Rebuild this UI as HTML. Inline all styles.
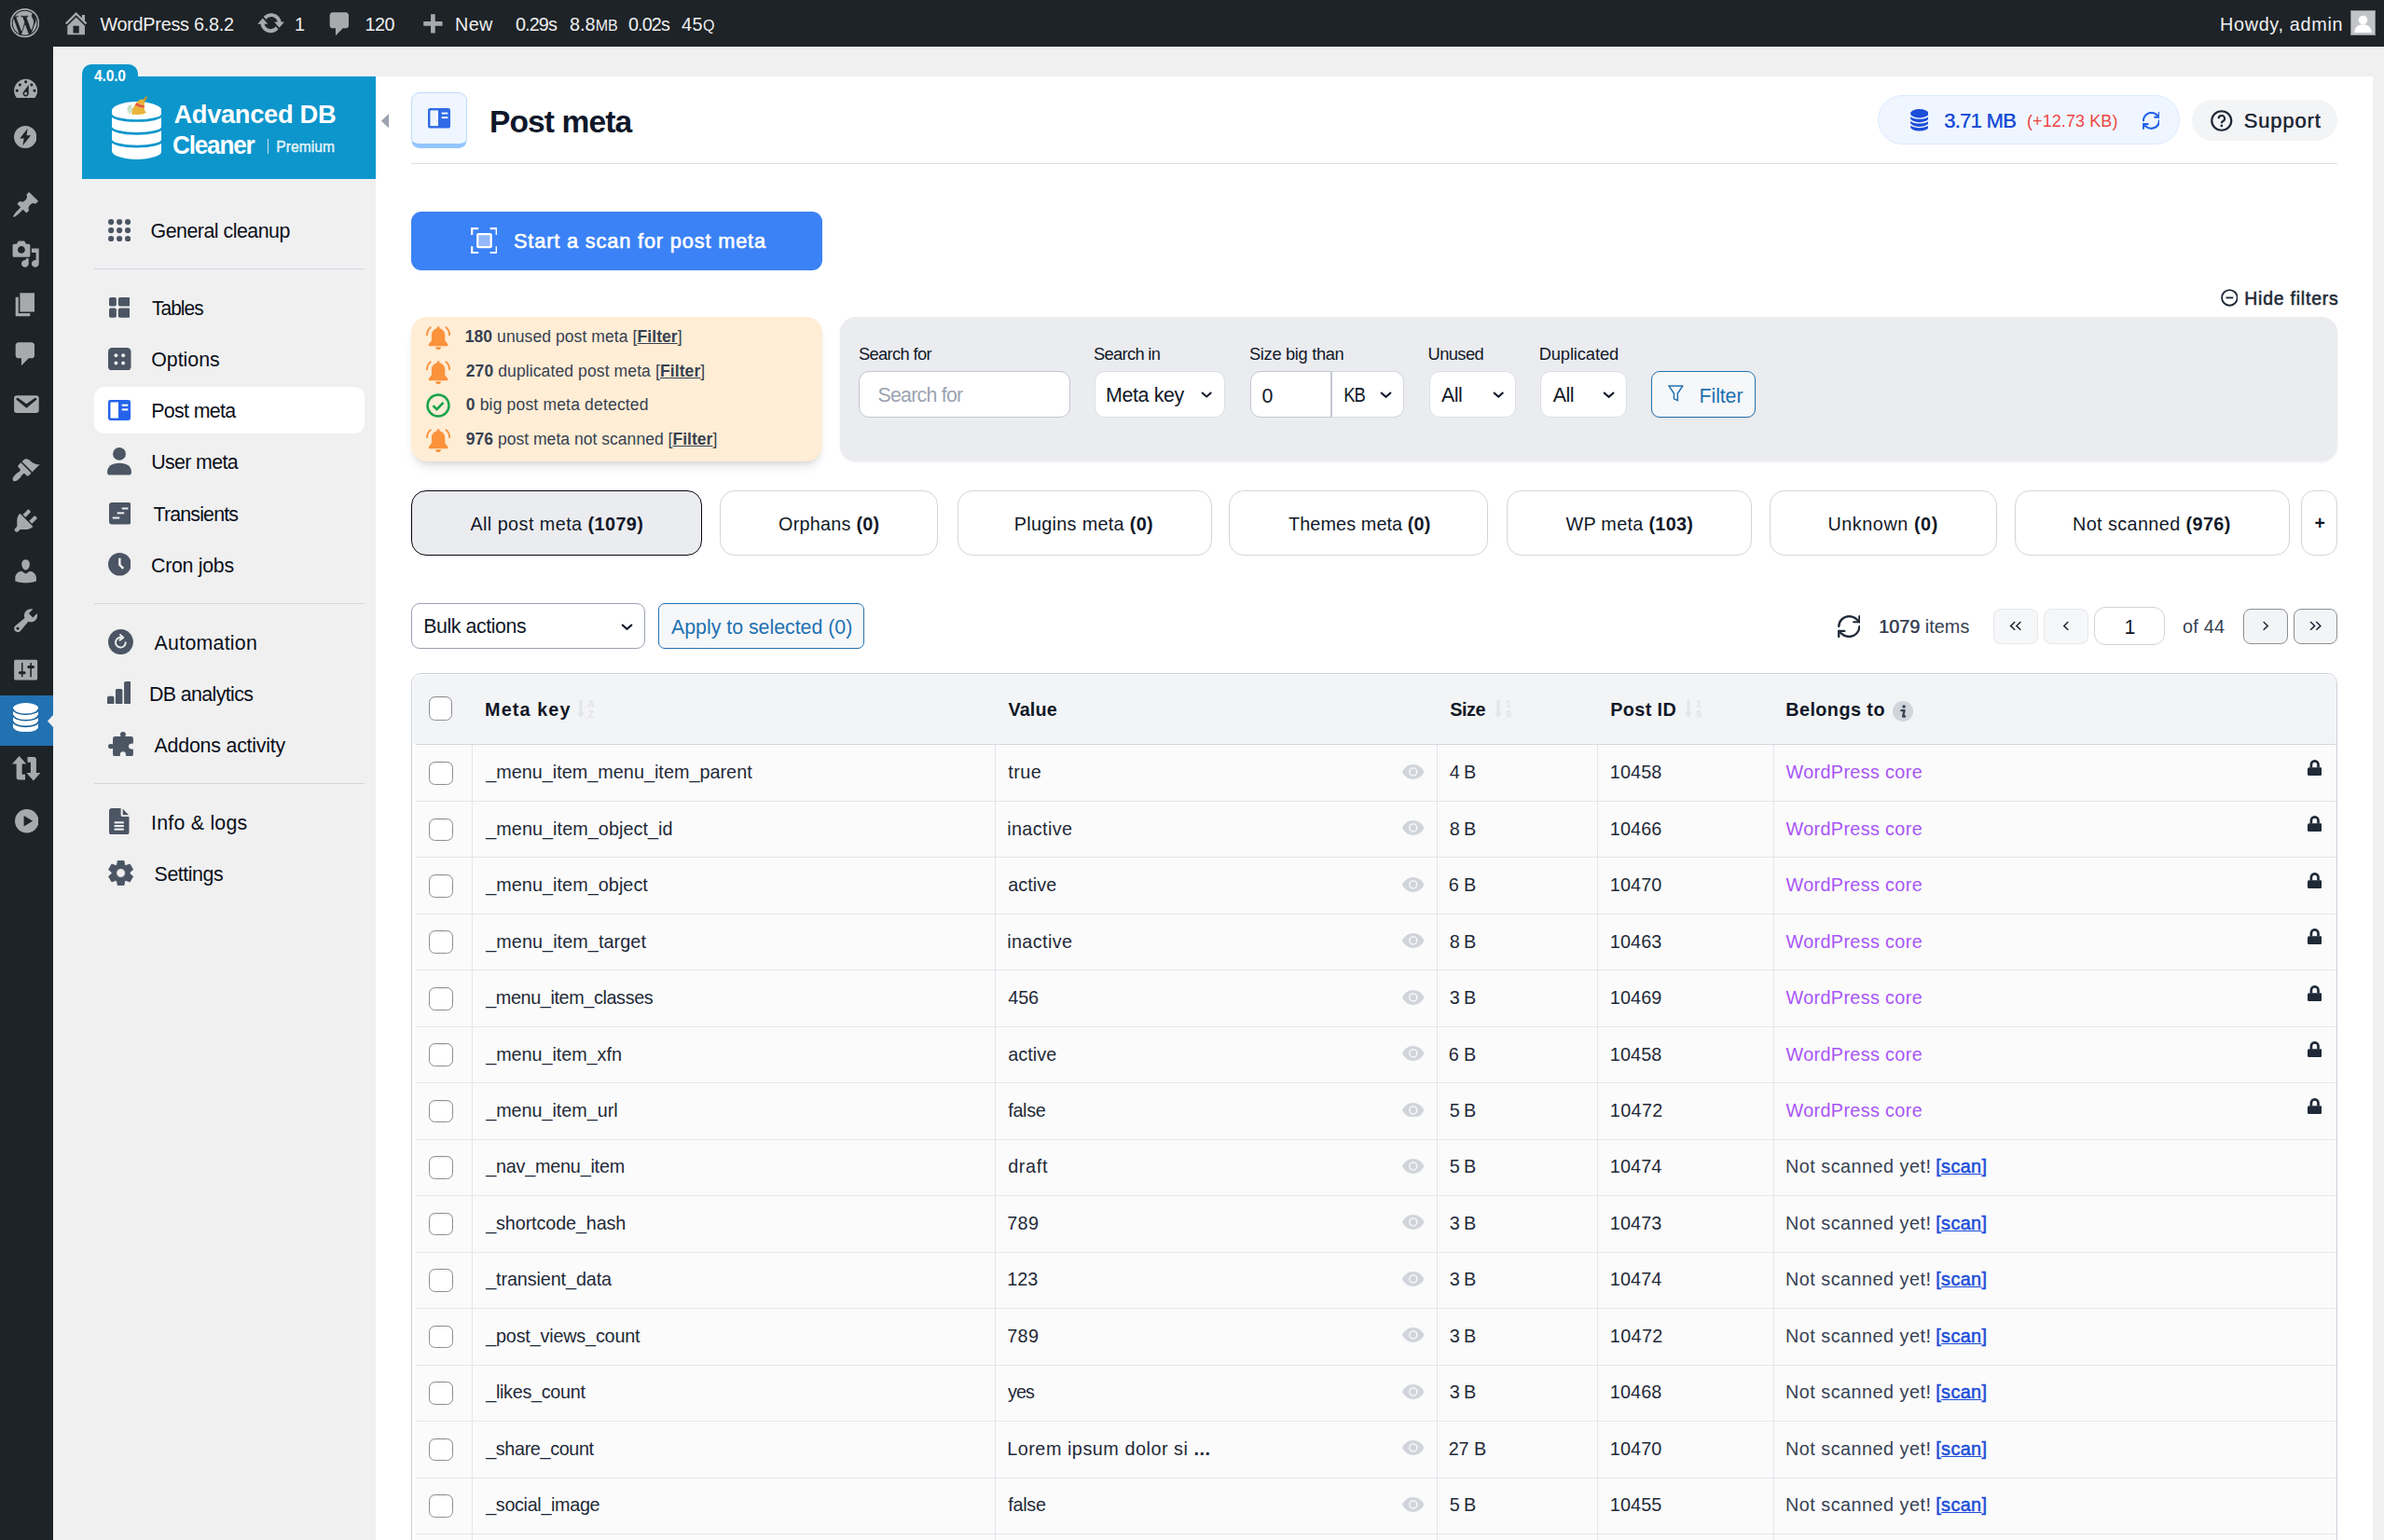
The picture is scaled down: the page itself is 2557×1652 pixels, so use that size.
<!DOCTYPE html><html lang="en"><head><meta charset="utf-8"><title>Post meta - Advanced DB Cleaner</title><style>
*{box-sizing:border-box;margin:0;padding:0}
html,body{width:2557px;height:1652px;overflow:hidden;background:#f0f0f1}
body{font-family:"Liberation Sans",sans-serif;position:relative;color:#1f2937}
.a{position:absolute;display:block}
.x{position:absolute;display:block;white-space:nowrap;line-height:1}
b{font-weight:700}
u{text-decoration:underline}
button{border:0;font:inherit;appearance:none}
</style></head><body><div id="wpadminbar"><div class="a" style="left:0px;top:0px;width:2557.00px;height:50.00px;background:#1d2327"></div><svg class="a" style="left:11px;top:9.4px" width="31.25" height="31.25" viewBox="0 0 20 20"><circle cx="10" cy="10" r="10" fill="#a7aaad"/><path fill="#1d2327" fill-rule="evenodd" stroke="#a7aaad" stroke-width=".500" d="M18.9 10a8.900 8.900 0 1 1-17.800 0a8.900 8.900 0 1 1 17.800 0zM7.78 15.37L4.37 6.22c.55-.02 1.17-.08 1.17-.08.5-.06.44-1.13-.06-1.11 0 0-1.45.11-2.37.11-.18 0-.37 0-.58-.01C4.12 2.69 6.87 1.11 10 1.11c2.33 0 4.45.87 6.05 2.34-.68-.11-1.65.39-1.65 1.58 0 .74.45 1.36.9 2.1.35.61.55 1.36.55 2.46 0 1.49-1.4 5-1.4 5l-3.03-8.37c.54-.02.82-.17.82-.17.5-.05.44-1.25-.06-1.22 0 0-1.44.12-2.38.12-.87 0-2.33-.12-2.33-.12-.5-.03-.56 1.2-.06 1.22l.92.08 1.26 3.41zM17.41 10c.24-.64.74-1.87.43-4.25.7 1.29 1.05 2.71 1.05 4.25 0 3.29-1.73 6.24-4.4 7.78.97-2.59 1.94-5.2 2.92-7.78zM6.1 18.09C3.12 16.65 1.11 13.53 1.11 10c0-1.3.23-2.48.72-3.59C3.25 10.3 4.67 14.2 6.1 18.09zM10.13 11.46l2.58 6.98c-.86.29-1.76.45-2.71.45-.79 0-1.57-.11-2.29-.33.81-2.38 1.62-4.74 2.42-7.1z"/><circle cx="10" cy="10" r="8.600" fill="none" stroke="#1d2327" stroke-width=".700"/></svg><svg class="a" style="left:65.6px;top:8.8px;" width="31.25" height="31.25" viewBox="0 0 20 20"><path fill="#a7aaad" fill-rule="evenodd" d="M16 8.5l1.53 1.53-1.06 1.06L10 4.62l-6.47 6.47-1.06-1.06L10 2.5l4 4v-2h2v4zm-6-2.46l6 5.99V18H4v-5.97zM12 17v-5H8v5h4z"/></svg><span class="x" style="letter-spacing:-0.241px;left:107.40px;top:17.00px;font-size:19.79px;font-weight:400;color:#f0f0f1;">WordPress 6.8.2</span><svg class="a" style="left:274.7px;top:9.2px;" width="31.25" height="31.25" viewBox="0 0 20 20"><path fill="#a7aaad" fill-rule="evenodd" d="M10.2 3.28c3.53 0 6.43 2.61 6.92 6h2.08l-3.5 4-3.5-4h2.32c-.45-1.97-2.21-3.45-4.32-3.45-1.45 0-2.73.71-3.54 1.78L4.95 5.66C6.23 4.2 8.11 3.28 10.2 3.28zm-.4 13.44c-3.52 0-6.43-2.61-6.92-6H.8l3.5-4c1.17 1.33 2.33 2.67 3.5 4H5.48c.45 1.97 2.21 3.45 4.32 3.45 1.45 0 2.73-.71 3.54-1.78l1.71 1.95c-1.28 1.46-3.15 2.38-5.25 2.38z"/></svg><span class="x" style="letter-spacing:0.000px;left:316.00px;top:17.00px;font-size:19.79px;font-weight:400;color:#f0f0f1;">1</span><svg class="a" style="left:349.3px;top:10.3px;" width="31.25" height="31.25" viewBox="0 0 20 20"><path fill="#a7aaad" fill-rule="evenodd" d="M5 2h9c1.1 0 2 .9 2 2v7c0 1.1-.9 2-2 2h-2l-5 5v-5H5c-1.1 0-2-.9-2-2V4c0-1.1.9-2 2-2z"/></svg><span class="x" style="letter-spacing:-0.557px;left:391.60px;top:17.00px;font-size:19.79px;font-weight:400;color:#f0f0f1;">120</span><svg class="a" style="left:447.5px;top:11.9px;" width="31.25" height="31.25" viewBox="0 0 20 20"><path fill="#a7aaad" fill-rule="evenodd" d="M17 7v3h-5v5H9v-5H4V7h5V2h3v5h5z"/></svg><span class="x" style="letter-spacing:0.354px;left:488.00px;top:17.00px;font-size:19.79px;font-weight:400;color:#f0f0f1;">New</span><span class="x" style="letter-spacing:-0.879px;left:553.00px;top:17.00px;font-size:19.79px;font-weight:400;color:#f0f0f1;">0.29s</span><span class="x" style="letter-spacing:0.043px;left:611.00px;top:17.00px;font-size:19.79px;font-weight:400;color:#f0f0f1;">8.8<span style="font-size:16px">MB</span></span><span class="x" style="letter-spacing:-0.879px;left:674.00px;top:17.00px;font-size:19.79px;font-weight:400;color:#f0f0f1;">0.02s</span><span class="x" style="letter-spacing:0.488px;left:731.00px;top:17.00px;font-size:19.79px;font-weight:400;color:#f0f0f1;">45<span style="font-size:16px">Q</span></span><span class="x" style="letter-spacing:0.693px;left:2381.00px;top:17.00px;font-size:19.79px;font-weight:400;color:#f0f0f1;">Howdy, admin</span><svg class="a" style="left:2521px;top:11px;outline:1px solid #8c8f94;outline-offset:-1px" width="27.00" height="27.00" viewBox="0 0 26 26" preserveAspectRatio="none"><rect width="26" height="26" fill="#c3c4c7"/><circle cx="13" cy="10.2" r="4.6" fill="#fff"/><path d="M4.2 23c0-5 3.6-8.2 8.8-8.2s8.8 3.2 8.8 8.2z" fill="#fff"/></svg></div><div id="adminmenu"><div class="a" style="left:0px;top:50px;width:57.00px;height:1602.00px;background:#1d2327"></div><svg class="a" style="left:12.2px;top:80.4px;" width="31.25" height="31.25" viewBox="0 0 20 20"><path fill="#a7aaad" fill-rule="evenodd" d="M3.76 16h12.48c1.1-1.37 1.76-3.11 1.76-5 0-4.42-3.58-8-8-8s-8 3.58-8 8c0 1.89.66 3.63 1.76 5zM10 4c.55 0 1 .45 1 1s-.45 1-1 1-1-.45-1-1 .45-1 1-1zM6 6c.55 0 1 .45 1 1s-.45 1-1 1-1-.45-1-1 .45-1 1-1zm8 0c.55 0 1 .45 1 1s-.45 1-1 1-1-.45-1-1 .45-1 1-1zm-5.37 5.55L12 7v6c0 1.1-.9 2-2 2s-2-.9-2-2c0-.57.24-1.08.63-1.45zM4 10c.55 0 1 .45 1 1s-.45 1-1 1-1-.45-1-1 .45-1 1-1zm12 0c.55 0 1 .45 1 1s-.45 1-1 1-1-.45-1-1 .45-1 1-1zm-5 3c0-.55-.45-1-1-1s-1 .45-1 1 .45 1 1 1 1-.45 1-1z"/></svg><svg class="a" style="left:15px;top:134.5px;" width="24.40" height="24.00" viewBox="0 0 24 24" preserveAspectRatio="none"><circle cx="12" cy="12" r="12" fill="#a7aaad"/><path d="M14.400 2.800L6.200 13.600h4.300l-1.400 7.600 8.700-11h-4.500z" fill="#1d2327"/></svg><svg class="a" style="left:12.2px;top:204.4px;" width="31.25" height="31.25" viewBox="0 0 20 20"><path fill="#a7aaad" fill-rule="evenodd" d="M10.44 3.02l1.82-1.82 6.36 6.35-1.83 1.82c-1.05-.68-2.48-.57-3.41.36l-.75.75c-.92.93-1.04 2.35-.35 3.41l-1.83 1.82-2.41-2.41-2.8 2.79c-.42.42-3.38 2.71-3.8 2.29s1.86-3.39 2.28-3.81l2.79-2.79L4.1 9.36l1.83-1.82c1.05.69 2.48.57 3.4-.36l.75-.75c.93-.92 1.05-2.35.36-3.41z"/></svg><svg class="a" style="left:12.2px;top:257.4px;" width="31.25" height="31.25" viewBox="0 0 20 20"><path fill="#a7aaad" fill-rule="evenodd" d="M13 11V4c0-.55-.45-1-1-1h-1.67L9 1H5L3.67 3H2c-.55 0-1 .45-1 1v7c0 .55.45 1 1 1h10c.55 0 1-.45 1-1zM7 4.5c1.38 0 2.5 1.12 2.5 2.5S8.38 9.5 7 9.5 4.5 8.38 4.5 7 5.62 4.5 7 4.5zM14 6h5v10.5c0 1.38-1.12 2.5-2.5 2.5S14 17.88 14 16.5s1.12-2.5 2.5-2.5c.17 0 .34.02.5.05V9h-3V6zm-4 8.05V13h2v3.5c0 1.38-1.12 2.5-2.5 2.5S7 17.88 7 16.5 8.12 14 9.5 14c.17 0 .34.02.5.05z"/></svg><svg class="a" style="left:12.2px;top:310.9px;" width="31.25" height="31.25" viewBox="0 0 20 20"><path fill="#a7aaad" fill-rule="evenodd" d="M6 15V2h10v13H6zm-1 1h8v2H3V5h2v11z"/></svg><svg class="a" style="left:12.2px;top:363.9px;" width="31.25" height="31.25" viewBox="0 0 20 20"><path fill="#a7aaad" fill-rule="evenodd" d="M5 2h9c1.1 0 2 .9 2 2v7c0 1.1-.9 2-2 2h-2l-5 5v-5H5c-1.1 0-2-.9-2-2V4c0-1.1.9-2 2-2z"/></svg><svg class="a" style="left:12.2px;top:417.9px;" width="31.25" height="31.25" viewBox="0 0 20 20"><path fill="#a7aaad" fill-rule="evenodd" d="M3.87 4h13.25C18.37 4 19 4.59 19 5.79v8.42c0 1.19-.63 1.79-1.88 1.79H3.87c-1.25 0-1.88-.6-1.88-1.79V5.79c0-1.2.63-1.79 1.88-1.79zm6.62 8.6l6.74-5.53c.24-.2.43-.66.13-1.07-.29-.41-.82-.42-1.17-.17l-5.7 3.86L4.8 5.83c-.35-.25-.88-.24-1.17.17-.3.41-.11.87.13 1.07z"/></svg><svg class="a" style="left:12.2px;top:489.4px;" width="31.25" height="31.25" viewBox="0 0 20 20"><path fill="#a7aaad" fill-rule="evenodd" d="M14.48 11.06L7.41 3.99l1.5-1.5c.5-.56 2.3-.47 3.51.32 1.21.8 1.43 1.28 2.91 2.1 1.18.64 2.45 1.26 4.45.85zm-.71.71L6.7 4.7 4.93 6.47c-.39.39-.39 1.02 0 1.41l1.06 1.06c.39.39.39 1.03 0 1.42-.6.6-1.43 1.11-2.21 1.69-.35.26-.7.53-1.01.84C1.43 14.23.4 16.08 1.4 17.07c.99 1 2.84-.03 4.18-1.36.31-.31.58-.66.85-1.02.57-.78 1.08-1.61 1.69-2.21.39-.39 1.02-.39 1.41 0l1.06 1.06c.39.39 1.02.39 1.41 0z"/></svg><svg class="a" style="left:12.2px;top:542.9px;" width="31.25" height="31.25" viewBox="0 0 20 20"><path fill="#a7aaad" fill-rule="evenodd" d="M13.11 4.36L9.87 7.6 8 5.73l3.24-3.24c.35-.34 1.05-.2 1.56.32.52.51.66 1.21.31 1.55zm-8 1.77l.91-1.12 9.01 9.01-1.19.84c-.71.71-2.63 1.16-3.82 1.16H6.14L4.9 17.26c-.59.59-1.54.59-2.12 0-.59-.58-.59-1.53 0-2.12l1.24-1.24v-3.88c0-1.13.4-3.19 1.09-3.89zm7.26 3.97l3.24-3.24c.34-.35 1.04-.21 1.55.31.52.51.66 1.21.31 1.55l-3.24 3.25z"/></svg><svg class="a" style="left:12.2px;top:596.9px;" width="31.25" height="31.25" viewBox="0 0 20 20"><path fill="#a7aaad" fill-rule="evenodd" d="M10 9.25c-2.27 0-2.73-3.44-2.73-3.44C7 4.02 7.82 2 9.97 2c2.16 0 2.98 2.02 2.71 3.81 0 0-.41 3.44-2.68 3.44zm0 2.57L12.72 10c2.39 0 4.52 2.33 4.52 4.53v2.49s-3.65 1.13-7.24 1.13c-3.65 0-7.24-1.13-7.24-1.13v-2.49c0-2.25 1.94-4.48 4.47-4.48z"/></svg><svg class="a" style="left:12.2px;top:649.9px;" width="31.25" height="31.25" viewBox="0 0 20 20"><path fill="#a7aaad" fill-rule="evenodd" d="M16.68 9.77c-1.34 1.34-3.3 1.67-4.95.99l-5.41 6.52c-.99.99-2.59.99-3.58 0s-.99-2.59 0-3.57l6.52-5.42c-.68-1.65-.35-3.61.99-4.95 1.28-1.28 3.12-1.62 4.72-1.06l-2.89 2.89 2.82 2.82 2.86-2.87c.53 1.58.18 3.39-1.08 4.65zM3.81 16.21c.4.39 1.04.39 1.43 0 .4-.4.4-1.04 0-1.43-.39-.4-1.03-.4-1.43 0-.39.39-.39 1.03 0 1.43z"/></svg><svg class="a" style="left:12.2px;top:703.4px;" width="31.25" height="31.25" viewBox="0 0 20 20"><path fill="#a7aaad" fill-rule="evenodd" d="M18 16V4c0-.55-.45-1-1-1H3c-.55 0-1 .45-1 1v12c0 .55.45 1 1 1h14c.55 0 1-.45 1-1zM8 11h1c.55 0 1 .45 1 1s-.45 1-1 1H8v1.5c0 .28-.22.5-.5.5s-.5-.22-.5-.5V13H6c-.55 0-1-.45-1-1s.45-1 1-1h1V5.5c0-.28.22-.5.5-.5s.5.22.5.5V11zm5-2h-1c-.55 0-1-.45-1-1s.45-1 1-1h1V5.5c0-.28.22-.5.5-.5s.5.22.5.5V7h1c.55 0 1 .45 1 1s-.45 1-1 1h-1v5.5c0 .28-.22.5-.5.5s-.5-.22-.5-.5V9z"/></svg><div class="a" style="left:0px;top:746px;width:57.00px;height:54.00px;background:#2271b1"></div><svg class="a" style="left:13.9px;top:753.7px;" width="27.30" height="31.30" viewBox="0 0 27.3 31.3" preserveAspectRatio="none"><g fill="#fff"><rect x="0" y="5.7" width="27.3" height="19.9"/><ellipse cx="13.65" cy="5.7" rx="13.65" ry="5.7"/><ellipse cx="13.65" cy="25.6" rx="13.65" ry="5.7"/></g><g fill="none" stroke="#135e96" stroke-width="1.600"><path d="M0 6.600A13.650 5.700 0 0 0 27.300 6.600"/><path d="M0 13.100A13.650 5.700 0 0 0 27.300 13.100"/><path d="M0 19.700A13.650 5.700 0 0 0 27.300 19.700"/></g></svg><svg class="a" style="left:50.9px;top:766.6px;" width="6.10" height="13.00" viewBox="0 0 6.1 13" preserveAspectRatio="none"><path d="M6.1 0v13L0 6.500z" fill="#f0f0f1"/></svg><svg class="a" style="left:12.5px;top:811px;" width="30.50" height="26.50" viewBox="0 0 30.5 26.5" preserveAspectRatio="none"><g fill="#a7aaad"><path d="M7.6 0L0 8.600h4.600v14.400c0 1.400 1.100 2.500 2.500 2.500H14v-5.700h-3.400V8.600h4.600z"/><path d="M22.900 26.500l7.600-8.600h-4.600V3.500c0-1.400-1.100-2.500-2.500-2.500H16.500v5.700h3.400v11.200h-4.600z"/></g></svg><svg class="a" style="left:15.5px;top:868px;" width="25.50" height="25.50" viewBox="0 0 24 24" preserveAspectRatio="none"><circle cx="12" cy="12" r="12" fill="#a7aaad"/><path d="M9 6.500l9 5.500-9 5.500z" fill="#1d2327"/></svg></div><div id="adbc-sidebar"><div class="a" style="left:88px;top:69px;width:60.00px;height:21.00px;background:#0d96cc;border-radius:10px 10px 0 0"></div><div class="a" style="left:88px;top:82px;width:315.00px;height:110.00px;background:#0d96cc"></div><span class="x" style="letter-spacing:-0.179px;left:101.00px;top:74.00px;font-size:15.6px;font-weight:700;color:#fff;">4.0.0</span><svg class="a" style="left:119.7px;top:103px;" width="53.50" height="69.00" viewBox="0 0 53.5 69" preserveAspectRatio="none"><rect x="0" y="15.6" width="53.5" height="43.5" fill="#fff"/><ellipse cx="26.75" cy="59.1" rx="26.75" ry="8.8" fill="#fff"/><ellipse cx="26.75" cy="15.6" rx="26.75" ry="9.5" fill="#fff"/><g fill="none" stroke="#0d96cc" stroke-width="2.700"><path d="M-.5 19.900A27.250 6.600 0 0 0 54 19.900"/><path d="M-.5 33.700A27.250 6.600 0 0 0 54 33.700"/><path d="M-.5 47.500A27.250 6.600 0 0 0 54 47.500"/></g><path d="M36.300 .200l1.900 1-3.700 6.200-2.300-1.200z" fill="#c9972b"/><path d="M33.500 3.500C30.500 3 27.500 5 25.500 8.500C22.500 12 20.800 16 21.400 19.200L23 20.400L24.500 19.300L26 20.600L27.600 19.400L29.300 20.500L31 19.200L33 19.800L35.200 18.400L37.200 17.600C35.600 16.500 34.400 14.800 34.600 12.500C35 9 35.500 6 33.500 3.500z" fill="#e8b43a"/><path d="M26.200 7.300c2.600 1.600 5.400 2.600 8.600 3l-.300 2.500c-3.400-.400-6.600-1.500-9.600-3.300z" fill="#e5534b"/><path d="M17.200 17.500l3.800-8M18.800 19l3-6.500M16.600 14.500l2.600-4.500" stroke="#a9cfa6" stroke-width="1.100" fill="none"/></svg><span class="x" style="letter-spacing:-0.317px;left:186.40px;top:109.00px;font-size:27.3px;font-weight:700;color:#fff;">Advanced DB</span><span class="x" style="transform:scaleX(0.9741);transform-origin:1.00px 50%;letter-spacing:-1.206px;left:185.40px;top:143.00px;font-size:26.81px;font-weight:700;color:#fff;">Cleaner</span><div class="a" style="left:286.5px;top:149px;width:1.30px;height:16.00px;background:rgba(255,255,255,.75)"></div><span class="x" style="letter-spacing:0.050px;left:296.30px;top:150.00px;font-size:15.6px;font-weight:400;color:rgba(255,255,255,.86);-webkit-text-stroke:0.44px currentColor;">Premium</span><div class="a" style="left:101px;top:288px;width:290.00px;height:1.30px;background:#d3d7de"></div><div class="a" style="left:101px;top:647.2px;width:290.00px;height:1.30px;background:#d3d7de"></div><div class="a" style="left:101px;top:840px;width:290.00px;height:1.30px;background:#d3d7de"></div><div class="a" style="left:101px;top:415.2px;width:290.00px;height:49.40px;background:#fff;border-radius:11px"></div><span class="x" style="letter-spacing:-0.491px;left:161.60px;top:238.00px;font-size:21.35px;font-weight:400;color:#0b0f19;">General cleanup</span><span class="x" style="transform:scaleX(0.9782);transform-origin:-0.00px 50%;letter-spacing:-0.961px;left:163.00px;top:321.00px;font-size:21.35px;font-weight:400;color:#0b0f19;">Tables</span><span class="x" style="letter-spacing:-0.015px;left:162.20px;top:376.00px;font-size:21.35px;font-weight:400;color:#0b0f19;">Options</span><span class="x" style="letter-spacing:-0.640px;left:162.20px;top:431.00px;font-size:21.35px;font-weight:400;color:#0b0f19;">Post meta</span><span class="x" style="letter-spacing:-0.623px;left:162.20px;top:486.00px;font-size:21.35px;font-weight:400;color:#0b0f19;">User meta</span><span class="x" style="letter-spacing:-0.832px;left:164.60px;top:542.00px;font-size:21.35px;font-weight:400;color:#0b0f19;">Transients</span><span class="x" style="letter-spacing:-0.286px;left:162.00px;top:597.00px;font-size:21.35px;font-weight:400;color:#0b0f19;">Cron jobs</span><span class="x" style="letter-spacing:0.254px;left:165.60px;top:680.00px;font-size:21.35px;font-weight:400;color:#0b0f19;">Automation</span><span class="x" style="letter-spacing:-0.605px;left:160.00px;top:735.00px;font-size:21.35px;font-weight:400;color:#0b0f19;">DB analytics</span><span class="x" style="letter-spacing:-0.206px;left:165.60px;top:790.00px;font-size:21.35px;font-weight:400;color:#0b0f19;">Addons activity</span><span class="x" style="letter-spacing:0.241px;left:162.00px;top:873.00px;font-size:21.35px;font-weight:400;color:#0b0f19;">Info &amp; logs</span><span class="x" style="letter-spacing:-0.436px;left:165.60px;top:928.00px;font-size:21.35px;font-weight:400;color:#0b0f19;">Settings</span><svg class="a" style="left:115.8px;top:234.8px;" width="24.20" height="24.20" viewBox="0 0 24 24" preserveAspectRatio="none"><g fill="#4b5563"><circle cx="3.1" cy="3.1" r="3.1"/><circle cx="3.1" cy="12" r="3.1"/><circle cx="3.1" cy="20.9" r="3.1"/><circle cx="12" cy="3.1" r="3.1"/><circle cx="12" cy="12" r="3.1"/><circle cx="12" cy="20.9" r="3.1"/><circle cx="20.9" cy="3.1" r="3.1"/><circle cx="20.9" cy="12" r="3.1"/><circle cx="20.9" cy="20.9" r="3.1"/></g></svg><svg class="a" style="left:116.5px;top:319px;" width="22.70" height="21.70" viewBox="0 0 24 24" preserveAspectRatio="none"><g fill="#4b5563"><rect x="0" y="0" width="8.3" height="10.6" rx="2"/><rect x="10.4" y="0" width="13.6" height="10.6" rx="2"/><rect x="0" y="12.8" width="8.3" height="11.2" rx="2"/><rect x="10.4" y="12.8" width="13.6" height="11.2" rx="2"/></g></svg><svg class="a" style="left:116px;top:372.5px;" width="24.50" height="24.70" viewBox="0 0 24 24" preserveAspectRatio="none"><rect width="24" height="24" rx="4.2" fill="#4b5563"/><g fill="#f0f0f1"><circle cx="8.2" cy="8" r="1.9"/><circle cx="15.8" cy="8" r="1.9"/><circle cx="8.2" cy="16" r="1.900"/><circle cx="15.800" cy="16" r="1.900"/></g></svg><svg class="a" style="left:116px;top:428.8px;" width="24.00" height="22.00" viewBox="0 0 24 24" preserveAspectRatio="none"><rect width="24" height="24" rx="2.6" fill="#2563eb"/><rect x="2.45" y="2.7" width="8.55" height="18.6" fill="#fff"/><rect x="14.700" y="5.100" width="6.600" height="2.200" fill="#fff"/><rect x="14.700" y="10.200" width="6.600" height="2.200" fill="#fff"/></svg><svg class="a" style="left:115px;top:480.4px;" width="26.00" height="29.60" viewBox="0 0 24 24" preserveAspectRatio="none"><g fill="#4b5563"><ellipse cx="12" cy="5.6" rx="6.4" ry="5.6"/><path d="M0 21.500c0-5 4.500-8 12-8s12 3 12 8c0 1.600-1 2.500-2.500 2.500h-19C1 24 0 23.100 0 21.500z"/></g></svg><svg class="a" style="left:116.8px;top:539px;" width="23.70" height="23.50" viewBox="0 0 24 24" preserveAspectRatio="none"><rect width="24" height="24" rx="3" fill="#4b5563"/><g fill="#f0f0f1"><rect x="13.9" y="5.6" width="6.8" height="2"/><rect x="8.800" y="10.600" width="7.600" height="2"/><rect x="3.800" y="15.900" width="7.600" height="2"/></g></svg><svg class="a" style="left:115.6px;top:593.4px;" width="24.70" height="24.60" viewBox="0 0 24 24" preserveAspectRatio="none"><circle cx="12" cy="12" r="12" fill="#4b5563"/><path d="M12 5.500v7l3.800 4" stroke="#f0f0f1" stroke-width="2.400" fill="none"/></svg><svg class="a" style="left:116.1px;top:674.9px;" width="26.90" height="27.10" viewBox="0 0 24 24" preserveAspectRatio="none"><circle cx="12" cy="12" r="12" fill="#4b5563"/><g fill="none" stroke="#f0f0f1" stroke-width="1.700" stroke-linecap="round" stroke-linejoin="round"><path d="M16.700 12.600A4.800 4.800 0 1 1 12.600 7.800"/><path d="M11.600 5.300L14.500 8 11.200 10.300"/></g></svg><svg class="a" style="left:114.5px;top:730.8px;" width="25.50" height="24.70" viewBox="0 0 24 24" preserveAspectRatio="none"><g fill="#4b5563"><rect x="0" y="15.3" width="7" height="8.7" rx="1.6"/><rect x="8.4" y="7.7" width="7" height="16.3" rx="1.6"/><rect x="17" y="0" width="7" height="24" rx="1.6"/></g></svg><svg class="a" style="left:116.1px;top:785.2px;" width="26.90" height="26.20" viewBox="0 0 24 24" preserveAspectRatio="none"><g fill="#4b5563"><rect x="4.500" y="4.600" width="19.500" height="19.400" rx="2"/><circle cx="14.200" cy="2.600" r="2.600"/><rect x="12.300" y="2.600" width="3.800" height="3"/><circle cx="2.500" cy="14.300" r="2.500"/><rect x="2.500" y="12.300" width="3" height="4"/></g><g fill="#f0f0f1"><circle cx="22.300" cy="14.300" r="2.700"/><rect x="22.300" y="11.600" width="2" height="5.400"/><circle cx="14.200" cy="22.200" r="2.700"/><rect x="11.500" y="22.200" width="5.400" height="2"/></g></svg><svg class="a" style="left:117.3px;top:866.6px;" width="21.50" height="28.60" viewBox="0 0 21.5 28.6" preserveAspectRatio="none"><path d="M3 0H12.600V7.300a1.600 1.600 0 0 0 1.600 1.600H21.500V25.600a3 3 0 0 1-3 3H3a3 3 0 0 1-3-3V3a3 3 0 0 1 3-3z" fill="#4b5563"/><path d="M14.700 .700L21.100 7.200H14.700z" fill="#4b5563"/><g fill="#f0f0f1"><rect x="5.600" y="14.300" width="10.200" height="2.100"/><rect x="5.600" y="18" width="10.200" height="2.100"/><rect x="5.600" y="21.600" width="10.200" height="2.100"/></g></svg><svg class="a" style="left:115.9px;top:922.9px;" width="27.20" height="27.00" viewBox="0 0 27.2 27" preserveAspectRatio="none"><path d="M9.47 4.72L10.24 0.32L16.96 0.32L17.73 4.72A9.7 9.7 0 0 1 19.13 5.53L19.13 5.53L23.33 4.00L26.69 9.83L23.27 12.69A9.7 9.7 0 0 1 23.27 14.31L23.27 14.31L26.69 17.17L23.33 23.00L19.13 21.47A9.7 9.7 0 0 1 17.73 22.28L17.73 22.28L16.96 26.68L10.24 26.68L9.47 22.28A9.7 9.7 0 0 1 8.07 21.47L8.07 21.47L3.87 23.00L0.51 17.17L3.93 14.31A9.7 9.7 0 0 1 3.93 12.69L3.93 12.69L0.51 9.83L3.87 4.00L8.07 5.53A9.7 9.7 0 0 1 9.47 4.72zM8.8 13.5a4.8 4.8 0 1 0 9.6 0a4.8 4.8 0 1 0 -9.6 0z" fill="#4b5563" fill-rule="evenodd" stroke="#4b5563" stroke-width=".800" stroke-linejoin="round"/></svg></div><div id="adbc-main"><div class="a" style="left:403px;top:82px;width:2142.00px;height:1618.00px;background:#fff"></div><svg class="a" style="left:408.7px;top:121.5px;" width="8.10" height="15.50" viewBox="0 0 8 16" preserveAspectRatio="none"><path d="M8 0v16L0 8z" fill="#9ca3af"/></svg><div class="a" style="left:441px;top:99px;width:60.00px;height:59.60px;background:#eff6ff;border:1px solid #bfdbfe;border-bottom:5px solid #93c5fd;border-radius:9px"></div><svg class="a" style="left:459px;top:116px;" width="24.00" height="21.50" viewBox="0 0 24 24" preserveAspectRatio="none"><rect width="24" height="24" rx="2.6" fill="#2f6be6"/><rect x="2.45" y="2.7" width="8.55" height="18.6" fill="#eff6ff"/><rect x="14.7" y="5.1" width="6.6" height="2.2" fill="#eff6ff"/><rect x="14.7" y="10.2" width="6.6" height="2.2" fill="#eff6ff"/></svg><h1 class="x" style="letter-spacing:-0.877px;left:525.00px;top:114.00px;font-size:33.54px;font-weight:700;color:#0f172a;">Post meta</h1><div class="a" style="left:2014px;top:102px;width:324.00px;height:53.00px;background:#eff6ff;border:1px solid #dbeafe;border-radius:27px"></div><svg class="a" style="left:2048.8px;top:117.4px;" width="19.50" height="23.60" viewBox="0 0 20 24" preserveAspectRatio="none"><ellipse cx="10" cy="19.200" rx="10" ry="4.800" fill="#1d4ed8"/><ellipse cx="10" cy="15.800" rx="11" ry="4.800" fill="#eff6ff"/><ellipse cx="10" cy="14.400" rx="10" ry="4.800" fill="#1d4ed8"/><ellipse cx="10" cy="11" rx="11" ry="4.800" fill="#eff6ff"/><ellipse cx="10" cy="9.600" rx="10" ry="4.800" fill="#1d4ed8"/><ellipse cx="10" cy="6.200" rx="11" ry="4.800" fill="#eff6ff"/><ellipse cx="10" cy="4.800" rx="10" ry="4.800" fill="#1d4ed8"/></svg><span class="x" style="letter-spacing:-0.678px;left:2085.00px;top:119.00px;font-size:21.94px;font-weight:400;color:#1d4ed8;text-shadow:0.4px 0 0 currentColor">3.71 MB</span><span class="x" style="letter-spacing:0.114px;left:2174.00px;top:122.00px;font-size:17.94px;font-weight:400;color:#ef4444;">(+12.73 KB)</span><svg class="a" style="left:2297.5px;top:119.8px;" width="18.90" height="18.80" viewBox="2 2 20 20" preserveAspectRatio="none"><g fill="none" stroke="#2563eb" stroke-width="2.3" stroke-linecap="round" stroke-linejoin="round"><path d="M3 12a9 9 0 0 1 9-9 9.750 9.750 0 0 1 6.740 2.740L21 8"/><path d="M21 3v5h-5"/><path d="M21 12a9 9 0 0 1-9 9 9.750 9.750 0 0 1-6.740-2.740L3 16"/><path d="M8 16H3v5"/></g></svg><div class="a" style="left:2351px;top:107px;width:156.00px;height:44.00px;background:#f3f4f6;border-radius:22px"></div><svg class="a" style="left:2371px;top:118.3px;" width="23.50" height="23.00" viewBox="0 0 24 24" preserveAspectRatio="none"><circle cx="12" cy="12" r="10.700" fill="none" stroke="#1f2937" stroke-width="2.300"/><path d="M8.800 9.600a3.300 3.300 0 1 1 4.800 2.900c-1 .600-1.500 1.100-1.500 2.300" fill="none" stroke="#1f2937" stroke-width="2.200"/><circle cx="12.100" cy="17.700" r="1.400" fill="#1f2937"/></svg><span class="x" style="letter-spacing:0.892px;left:2406.50px;top:119.00px;font-size:21.94px;font-weight:400;color:#1f2937;text-shadow:0.4px 0 0 currentColor">Support</span><div class="a" style="left:441px;top:175px;width:2066.00px;height:1.30px;background:#dbdee5"></div><button class="a btn" style="left:441px;top:227.3px;width:441.00px;height:62.40px;background:#3b82f6;border-radius:11px"></button><svg class="a" style="left:504.5px;top:243.7px;" width="28.90" height="28.30" viewBox="0 0 28 28" preserveAspectRatio="none"><g fill="none" stroke="#fff" stroke-width="2.200"><path d="M1.100 8V1.100h6.900"/><path d="M20 1.100h6.900V8"/><path d="M26.900 20v6.900H20"/><path d="M8 26.900H1.100V20"/></g><rect x="7" y="7" width="14" height="14" rx="1" fill="#93b8fa" stroke="#fff" stroke-width="2.200"/></svg><span class="x" style="letter-spacing:0.849px;left:551.00px;top:248.00px;font-size:21.74px;font-weight:400;color:#fff;-webkit-text-stroke:0.61px currentColor;">Start a scan for post meta</span><svg class="a" style="left:2381.7px;top:310px;" width="18.80" height="18.80" viewBox="0 0 24 24" preserveAspectRatio="none"><circle cx="12" cy="12" r="10.600" fill="none" stroke="#1f2937" stroke-width="2.400"/><path d="M7 12h10" stroke="#1f2937" stroke-width="2.400"/></svg><span class="x" style="letter-spacing:0.799px;left:2407.30px;top:311.00px;font-size:19.4px;font-weight:400;color:#1f2937;-webkit-text-stroke:0.54px currentColor;">Hide filters</span><div class="a" style="left:441.3px;top:339.8px;width:440.50px;height:154.80px;background:#ffedd5;border-radius:17px;box-shadow:0 8px 12px -4px rgba(0,0,0,.13),0 3px 5px -2px rgba(0,0,0,.08)"></div><svg class="a" style="left:457.1px;top:349.9px;" width="26.20" height="25.20" viewBox="0 0 26.2 25.2" preserveAspectRatio="none"><g fill="#fb923c"><path d="M13.100 .200C12.200 .200 11.600 .800 11.600 1.700L11.600 2.200C8.200 3 5.900 6 5.900 9.600L5.900 15.200L2.800 19.200L2.800 21.300L23.400 21.300L23.400 19.200L20.300 15.200L20.300 9.600C20.300 6 18 3 14.600 2.200L14.600 1.700C14.600 .800 14 .200 13.100 .200z"/><path d="M10.200 22.300h5.800a2.900 2.900 0 0 1-5.800 0z"/></g><g fill="none" stroke="#fb923c" stroke-width="1.900"><path d="M5.400 .800C2.600 2.800 1 6 .900 10.100"/><path d="M20.800 .800C23.600 2.800 25.200 6 25.300 10.100"/></g></svg><span class="x nt" style="letter-spacing:0.070px;left:498.70px;top:353.00px;font-size:17.55px;font-weight:400;color:#374151;"><b>180</b> unused post meta [<u><b>Filter</b></u>]</span><svg class="a" style="left:457.1px;top:386.9px;" width="26.20" height="25.20" viewBox="0 0 26.2 25.2" preserveAspectRatio="none"><g fill="#fb923c"><path d="M13.100 .200C12.200 .200 11.600 .800 11.600 1.700L11.600 2.200C8.200 3 5.900 6 5.900 9.600L5.900 15.200L2.800 19.200L2.800 21.300L23.400 21.300L23.400 19.200L20.300 15.200L20.300 9.600C20.300 6 18 3 14.600 2.200L14.600 1.700C14.600 .800 14 .200 13.100 .200z"/><path d="M10.200 22.300h5.800a2.900 2.900 0 0 1-5.800 0z"/></g><g fill="none" stroke="#fb923c" stroke-width="1.900"><path d="M5.400 .800C2.600 2.800 1 6 .900 10.100"/><path d="M20.800 .800C23.600 2.800 25.200 6 25.300 10.100"/></g></svg><span class="x nt" style="letter-spacing:0.098px;left:499.70px;top:390.00px;font-size:17.55px;font-weight:400;color:#374151;"><b>270</b> duplicated post meta [<u><b>Filter</b></u>]</span><svg class="a" style="left:457px;top:421.59999999999997px;" width="26.00" height="26.00" viewBox="0 0 26 26" preserveAspectRatio="none"><circle cx="13" cy="13" r="11.500" fill="none" stroke="#16a34a" stroke-width="2.500"/><path d="M7.500 13.200l4 4 7-7.400" fill="none" stroke="#16a34a" stroke-width="2.600"/></svg><span class="x nt" style="letter-spacing:0.167px;left:499.70px;top:426.00px;font-size:17.55px;font-weight:400;color:#374151;"><b>0</b> big post meta detected</span><svg class="a" style="left:457.1px;top:460.2px;" width="26.20" height="25.20" viewBox="0 0 26.2 25.2" preserveAspectRatio="none"><g fill="#fb923c"><path d="M13.100 .200C12.200 .200 11.600 .800 11.600 1.700L11.600 2.200C8.200 3 5.900 6 5.900 9.600L5.900 15.200L2.800 19.200L2.800 21.300L23.400 21.300L23.400 19.200L20.300 15.200L20.300 9.600C20.300 6 18 3 14.600 2.200L14.600 1.700C14.600 .800 14 .200 13.100 .200z"/><path d="M10.200 22.300h5.800a2.900 2.900 0 0 1-5.800 0z"/></g><g fill="none" stroke="#fb923c" stroke-width="1.900"><path d="M5.400 .800C2.600 2.800 1 6 .900 10.100"/><path d="M20.800 .800C23.600 2.800 25.200 6 25.300 10.100"/></g></svg><span class="x nt" style="letter-spacing:0.020px;left:499.70px;top:463.00px;font-size:17.55px;font-weight:400;color:#374151;"><b>976</b> post meta not scanned [<u><b>Filter</b></u>]</span><div class="a" style="left:901.2px;top:339.8px;width:1605.80px;height:154.80px;background:#ebecf0;border-radius:17px;box-shadow:0 1px 3px rgba(0,0,0,.06)"></div><label class="x" style="letter-spacing:-0.631px;left:921.00px;top:371.00px;font-size:18.28px;font-weight:400;color:#111827;">Search for</label><label class="x" style="letter-spacing:-0.664px;left:1173.00px;top:371.00px;font-size:18.28px;font-weight:400;color:#111827;">Search in</label><label class="x" style="letter-spacing:-0.321px;left:1340.00px;top:371.00px;font-size:18.28px;font-weight:400;color:#111827;">Size big than</label><label class="x" style="letter-spacing:-0.582px;left:1531.60px;top:371.00px;font-size:18.28px;font-weight:400;color:#111827;">Unused</label><label class="x" style="letter-spacing:-0.095px;left:1650.70px;top:371.00px;font-size:18.28px;font-weight:400;color:#111827;">Duplicated</label><div class="a" style="left:921px;top:398.2px;width:226.50px;height:49.50px;background:#fff;border:1.2px solid #c3c7cf;border-radius:11px"></div><span class="x" style="letter-spacing:-0.762px;left:941.50px;top:414.00px;font-size:21.35px;font-weight:400;color:#9ca3af;">Search for</span><div class="a" style="left:1173.6px;top:398.2px;width:140.00px;height:49.50px;background:#fff;border:1.2px solid #dcdfe4;border-radius:11px"></div><span class="x" style="letter-spacing:-0.348px;left:1186.00px;top:414.00px;font-size:21.35px;font-weight:400;color:#111827;">Meta key</span><svg class="a" style="left:1288.4px;top:420.15600000000006px;" width="12.30" height="6.89" viewBox="0 0 12 7" preserveAspectRatio="none"><path d="M1 1l5 4.600 5-4.600" fill="none" stroke="#111827" stroke-width="2"/></svg><div class="a" style="left:1340.5px;top:398.2px;width:87.70px;height:49.50px;background:#fff;border:1.2px solid #c3c7cf;border-radius:11px 0 0 11px"></div><span class="x" style="letter-spacing:0.000px;left:1353.60px;top:415.00px;font-size:21.35px;font-weight:400;color:#111827;">0</span><div class="a" style="left:1427.7px;top:398.2px;width:78.80px;height:49.50px;background:#fff;border:1.2px solid #d6d9df;border-left:1.2px solid #c3c7cf;border-radius:0 11px 11px 0"></div><span class="x" style="transform:scaleX(0.8635);transform-origin:1.00px 50%;letter-spacing:-0.961px;left:1441.30px;top:414.00px;font-size:21.35px;font-weight:400;color:#111827;">KB</span><svg class="a" style="left:1480px;top:419.96000000000004px;" width="13.00" height="7.28" viewBox="0 0 12 7" preserveAspectRatio="none"><path d="M1 1l5 4.600 5-4.600" fill="none" stroke="#111827" stroke-width="2"/></svg><div class="a" style="left:1532.6px;top:398.2px;width:93.20px;height:49.50px;background:#fff;border:1.2px solid #dcdfe4;border-radius:11px"></div><span class="x" style="letter-spacing:-0.496px;left:1546.00px;top:414.00px;font-size:21.35px;font-weight:400;color:#111827;">All</span><svg class="a" style="left:1600.6px;top:420.128px;" width="12.40" height="6.94" viewBox="0 0 12 7" preserveAspectRatio="none"><path d="M1 1l5 4.600 5-4.600" fill="none" stroke="#111827" stroke-width="2"/></svg><div class="a" style="left:1651.7px;top:398.2px;width:93.60px;height:49.50px;background:#fff;border:1.2px solid #dcdfe4;border-radius:11px"></div><span class="x" style="letter-spacing:-0.396px;left:1665.70px;top:414.00px;font-size:21.35px;font-weight:400;color:#111827;">All</span><svg class="a" style="left:1719.4px;top:419.9320000000001px;" width="13.10" height="7.34" viewBox="0 0 12 7" preserveAspectRatio="none"><path d="M1 1l5 4.600 5-4.600" fill="none" stroke="#111827" stroke-width="2"/></svg><button class="a" style="left:1771.2px;top:398.2px;width:111.50px;height:49.50px;background:#f6f7f9;border:1.5px solid #2271b1;border-radius:9px;box-shadow:0 1px 2px rgba(0,0,0,.08)"></button><svg class="a" style="left:1788.9px;top:413.3px;" width="16.80" height="18.20" viewBox="0 0 17 18" preserveAspectRatio="none"><path d="M.900 .900h15.200l-5.600 8v7.600l-4-1.800v-5.800z" fill="none" stroke="#2271b1" stroke-width="1.500" stroke-linejoin="round"/></svg><span class="x" style="letter-spacing:-0.106px;left:1822.60px;top:415.00px;font-size:21.35px;font-weight:400;color:#2271b1;">Filter</span><div class="a" style="left:441.3px;top:526.3px;width:311.50px;height:69.30px;border:1.3px solid #05070c;background:#ebecf0;border-radius:16px"></div><span class="x" style="letter-spacing:0.445px;left:504.40px;top:553.00px;font-size:19.79px;font-weight:400;color:#111827;">All post meta <b>(1079)</b></span><div class="a" style="left:772.4px;top:526.3px;width:234.00px;height:69.30px;border:1px solid #d1d5db;background:#fff;border-radius:16px"></div><span class="x" style="letter-spacing:0.262px;left:835.00px;top:553.00px;font-size:19.79px;font-weight:400;color:#111827;">Orphans <b>(0)</b></span><div class="a" style="left:1026.5px;top:526.3px;width:273.00px;height:69.30px;border:1px solid #d1d5db;background:#fff;border-radius:16px"></div><span class="x" style="letter-spacing:0.323px;left:1087.70px;top:553.00px;font-size:19.79px;font-weight:400;color:#111827;">Plugins meta <b>(0)</b></span><div class="a" style="left:1317.8px;top:526.3px;width:278.60px;height:69.30px;border:1px solid #d1d5db;background:#fff;border-radius:16px"></div><span class="x" style="letter-spacing:0.119px;left:1382.00px;top:553.00px;font-size:19.79px;font-weight:400;color:#111827;">Themes meta <b>(0)</b></span><div class="a" style="left:1616px;top:526.3px;width:262.70px;height:69.30px;border:1px solid #d1d5db;background:#fff;border-radius:16px"></div><span class="x" style="letter-spacing:0.318px;left:1679.40px;top:553.00px;font-size:19.79px;font-weight:400;color:#111827;">WP meta <b>(103)</b></span><div class="a" style="left:1898px;top:526.3px;width:243.80px;height:69.30px;border:1px solid #d1d5db;background:#fff;border-radius:16px"></div><span class="x" style="letter-spacing:0.573px;left:1960.40px;top:553.00px;font-size:19.79px;font-weight:400;color:#111827;">Unknown <b>(0)</b></span><div class="a" style="left:2161px;top:526.3px;width:294.90px;height:69.30px;border:1px solid #d1d5db;background:#fff;border-radius:16px"></div><span class="x" style="letter-spacing:0.414px;left:2223.00px;top:553.00px;font-size:19.79px;font-weight:400;color:#111827;">Not scanned <b>(976)</b></span><div class="a" style="left:2468px;top:526.3px;width:39.00px;height:69.30px;border:1px solid #d1d5db;background:#fff;border-radius:14px"></div><span class="x" style="letter-spacing:0.000px;left:2482.60px;top:552.00px;font-size:19.5px;font-weight:700;color:#111827;">+</span><div class="a" style="left:441.3px;top:646.5px;width:251.10px;height:49.80px;background:#fff;border:1px solid #9ca3af;border-radius:9px"></div><span class="x" style="letter-spacing:-0.428px;left:454.30px;top:662.00px;font-size:21.35px;font-weight:400;color:#111827;">Bulk actions</span><svg class="a" style="left:666px;top:668.86px;" width="13.00" height="7.28" viewBox="0 0 12 7" preserveAspectRatio="none"><path d="M1 1l5 4.600 5-4.600" fill="none" stroke="#111827" stroke-width="2"/></svg><button class="a" style="left:706.3px;top:646.5px;width:220.50px;height:49.80px;background:#f6f7f9;border:1.5px solid #2271b1;border-radius:7px"></button><span class="x" style="letter-spacing:-0.014px;left:720.00px;top:663.00px;font-size:21.35px;font-weight:400;color:#2271b1;">Apply to selected (0)</span><svg class="a" style="left:1970.6px;top:660px;" width="24.60" height="24.20" viewBox="2 2 20 20" preserveAspectRatio="none"><g fill="none" stroke="#1f2937" stroke-width="1.85" stroke-linecap="round" stroke-linejoin="round"><path d="M3 12a9 9 0 0 1 9-9 9.750 9.750 0 0 1 6.740 2.740L21 8"/><path d="M21 3v5h-5"/><path d="M21 12a9 9 0 0 1-9 9 9.750 9.750 0 0 1-6.740-2.740L3 16"/><path d="M8 16H3v5"/></g></svg><span class="x" style="letter-spacing:0.057px;left:2015.00px;top:663.00px;font-size:19.79px;font-weight:400;color:#374151;"><span style="text-shadow:0.4px 0 0 currentColor">1079</span> items</span><div class="a" style="left:2138px;top:652.9px;width:48.00px;height:38.10px;background:#f6f7f8;border:1px solid #e5e7eb;border-radius:8px"></div><div class="a" style="left:2192px;top:652.9px;width:48.00px;height:38.10px;background:#f6f7f8;border:1px solid #e5e7eb;border-radius:8px"></div><div class="a" style="left:2246.4px;top:651.2px;width:75.30px;height:40.80px;background:#fff;border:1px solid #cfd3da;border-radius:12px"></div><div class="a" style="left:2406px;top:652.9px;width:47.70px;height:38.10px;background:#f3f4f6;border:1px solid #8c8f94;border-radius:8px"></div><div class="a" style="left:2460px;top:652.9px;width:47.00px;height:38.10px;background:#f3f4f6;border:1px solid #8c8f94;border-radius:8px"></div><svg class="a" style="left:0;top:0" width="2557" height="720" viewBox="0 0 2557 720"><path d="M2161.2000000000003 667.0L2156.6 671.4L2161.2000000000003 675.8" fill="none" stroke="#1f2937" stroke-width="1.500"/><path d="M2167.4 667.0L2162.7999999999997 671.4L2167.4 675.8" fill="none" stroke="#1f2937" stroke-width="1.500"/><path d="M2218.3 667.0L2213.7 671.4L2218.3 675.8" fill="none" stroke="#1f2937" stroke-width="1.500"/><path d="M2427.7 667.0L2432.3 671.4L2427.7 675.8" fill="none" stroke="#1f2937" stroke-width="1.500"/><path d="M2478.1 667.0L2482.7000000000003 671.4L2478.1 675.8" fill="none" stroke="#1f2937" stroke-width="1.500"/><path d="M2484.2999999999997 667.0L2488.9 671.4L2484.2999999999997 675.8" fill="none" stroke="#1f2937" stroke-width="1.500"/></svg><span class="x" style="letter-spacing:0.000px;left:2278.50px;top:663.00px;font-size:21.35px;font-weight:400;color:#111827;">1</span><span class="x" style="letter-spacing:0.250px;left:2341.00px;top:663.00px;font-size:19.79px;font-weight:400;color:#374151;">of 44</span><div id="adbc-table"><div class="a" style="left:441.3px;top:722.4px;width:2065.90px;height:977.60px;border:1.3px solid #cdd2da;border-radius:11px;background:#fff"></div><div class="a" style="left:442.6px;top:723.6999999999999px;width:2063.30px;height:74.30px;background:#f3f4f6;border-radius:10px 10px 0 0"></div><div class="a" style="left:446px;top:797.9px;width:2059.90px;height:1.30px;background:#d3d7de"></div><div class="x" style="letter-spacing:1.118px;left:520.10px;top:752.00px;font-size:19.79px;font-weight:700;color:#111827;">Meta key</div><div class="x" style="letter-spacing:0.178px;left:1081.40px;top:752.00px;font-size:19.79px;font-weight:700;color:#111827;">Value</div><div class="x" style="letter-spacing:-0.397px;left:1555.20px;top:752.00px;font-size:19.79px;font-weight:700;color:#111827;">Size</div><div class="x" style="letter-spacing:0.405px;left:1727.20px;top:752.00px;font-size:19.79px;font-weight:700;color:#111827;">Post ID</div><div class="x" style="letter-spacing:0.453px;left:1915.20px;top:752.00px;font-size:19.79px;font-weight:700;color:#111827;">Belongs to</div><svg class="a" style="left:619.2px;top:751.2px;" width="19.50" height="19.00" viewBox="0 0 19.5 19" preserveAspectRatio="none"><rect x="2.300" y="0" width="3.300" height="14.500" fill="#e3e5ea"/><path d="M0 13.400h7.900l-3.950 5.500z" fill="#e3e5ea"/><text x="14.800" y="8" font-family="Liberation Sans" font-weight="700" font-size="11" text-anchor="middle" fill="#e3e5ea">A</text><text x="14.800" y="18.700" font-family="Liberation Sans" font-weight="700" font-size="10.500" text-anchor="middle" fill="#e3e5ea">Z</text></svg><svg class="a" style="left:1602.8px;top:751.2px;" width="19.50" height="19.00" viewBox="0 0 19.5 19" preserveAspectRatio="none"><rect x="2.300" y="0" width="3.300" height="14.500" fill="#e3e5ea"/><path d="M0 13.400h7.900l-3.950 5.500z" fill="#e3e5ea"/><text x="14.800" y="8" font-family="Liberation Sans" font-weight="700" font-size="11" text-anchor="middle" fill="#e3e5ea">1</text><text x="14.800" y="18.700" font-family="Liberation Sans" font-weight="700" font-size="10.500" text-anchor="middle" fill="#e3e5ea">9</text></svg><svg class="a" style="left:1807px;top:751.2px;" width="19.50" height="19.00" viewBox="0 0 19.5 19" preserveAspectRatio="none"><rect x="2.300" y="0" width="3.300" height="14.500" fill="#e3e5ea"/><path d="M0 13.400h7.900l-3.950 5.500z" fill="#e3e5ea"/><text x="14.800" y="8" font-family="Liberation Sans" font-weight="700" font-size="11" text-anchor="middle" fill="#e3e5ea">1</text><text x="14.800" y="18.700" font-family="Liberation Sans" font-weight="700" font-size="10.500" text-anchor="middle" fill="#e3e5ea">9</text></svg><div class="a" style="left:2029.7px;top:751.7px;width:22.70px;height:22.70px;background:#d1d5db;border-radius:50%"></div><svg class="a" style="left:2029.7px;top:751.7px;" width="22.70" height="22.70" viewBox="0 0 22.7 22.7" preserveAspectRatio="none"><circle cx="12.100" cy="6.100" r="1.750" fill="#374151"/><path d="M9.300 10.200h3.300l-1.500 6.300h2" fill="none" stroke="#374151" stroke-width="2.300" stroke-linejoin="round" stroke-linecap="round"/></svg><div class="a" style="left:460.2px;top:747.2px;width:24.70px;height:25.60px;background:#fff;border:1.2px solid #8c8f94;border-radius:6.5px;box-shadow:inset 0 1px 2px rgba(0,0,0,.1)"></div><div class="a" style="left:444.6px;top:799.2px;width:2061.30px;height:900.80px;background:#fbfbfc"></div><div class="a" style="left:446px;top:859px;width:2059.50px;height:1.00px;background:#e4e6ea"></div><div class="a" style="left:446px;top:919px;width:2059.50px;height:1.00px;background:#e4e6ea"></div><div class="a" style="left:446px;top:980px;width:2059.50px;height:1.00px;background:#e4e6ea"></div><div class="a" style="left:446px;top:1040px;width:2059.50px;height:1.00px;background:#e4e6ea"></div><div class="a" style="left:446px;top:1101px;width:2059.50px;height:1.00px;background:#e4e6ea"></div><div class="a" style="left:446px;top:1161px;width:2059.50px;height:1.00px;background:#e4e6ea"></div><div class="a" style="left:446px;top:1222px;width:2059.50px;height:1.00px;background:#e4e6ea"></div><div class="a" style="left:446px;top:1282px;width:2059.50px;height:1.00px;background:#e4e6ea"></div><div class="a" style="left:446px;top:1343px;width:2059.50px;height:1.00px;background:#e4e6ea"></div><div class="a" style="left:446px;top:1403px;width:2059.50px;height:1.00px;background:#e4e6ea"></div><div class="a" style="left:446px;top:1464px;width:2059.50px;height:1.00px;background:#e4e6ea"></div><div class="a" style="left:446px;top:1524px;width:2059.50px;height:1.00px;background:#e4e6ea"></div><div class="a" style="left:446px;top:1585px;width:2059.50px;height:1.00px;background:#e4e6ea"></div><div class="a" style="left:446px;top:1645px;width:2059.50px;height:1.00px;background:#e4e6ea"></div><div class="a" style="left:446px;top:1705px;width:2059.50px;height:1.00px;background:#e4e6ea"></div><div class="a" style="left:506px;top:799.2px;width:1.00px;height:900.80px;background:#e4e6ea"></div><div class="a" style="left:1067px;top:799.2px;width:1.00px;height:900.80px;background:#e4e6ea"></div><div class="a" style="left:1541px;top:799.2px;width:1.00px;height:900.80px;background:#e4e6ea"></div><div class="a" style="left:1713px;top:799.2px;width:1.00px;height:900.80px;background:#e4e6ea"></div><div class="a" style="left:1902px;top:799.2px;width:1.00px;height:900.80px;background:#e4e6ea"></div><div class="a" style="left:460.2px;top:817.035px;width:25.50px;height:24.60px;background:#fff;border:1.2px solid #8c8f94;border-radius:6.5px;box-shadow:inset 0 1px 2px rgba(0,0,0,.1)"></div><span class="x" style="letter-spacing:0.026px;left:521.20px;top:819.00px;font-size:19.79px;font-weight:400;color:#1f2937;">_menu_item_menu_item_parent</span><span class="x" style="letter-spacing:0.503px;left:1081.20px;top:819.00px;font-size:19.79px;font-weight:400;color:#1f2937;">true</span><svg class="a" style="left:1503.8px;top:819.735px;" width="23.50" height="15.90" viewBox="0 0 24 16" preserveAspectRatio="none"><path d="M12 0C6.500 0 2.200 3.400 0 8 2.200 12.600 6.500 16 12 16s9.800-3.400 12-8C21.800 3.400 17.500 0 12 0z" fill="#d1d5db"/><circle cx="12" cy="8" r="4.750" fill="#fbfbfc"/><circle cx="12" cy="8" r="3.400" fill="#d1d5db"/></svg><span class="x" style="letter-spacing:-0.555px;left:1554.70px;top:819.00px;font-size:19.79px;font-weight:400;color:#1f2937;">4 B</span><span class="x" style="letter-spacing:0.121px;left:1726.80px;top:819.00px;font-size:19.79px;font-weight:400;color:#1f2937;">10458</span><span class="x" style="letter-spacing:0.365px;left:1915.50px;top:819.00px;font-size:19.79px;font-weight:400;color:#a855f7;">WordPress core</span><svg class="a" style="left:2474.6px;top:814.935px;" width="15.40" height="17.00" viewBox="0 0 15.4 17" preserveAspectRatio="none"><path d="M3.900 8.600V5.200a3.800 3.800 0 0 1 7.600 0V8.600" fill="none" stroke="#1f2937" stroke-width="2.700"/><rect x="0" y="8.200" width="15.400" height="8.800" rx="1.600" fill="#1f2937"/></svg><div class="a" style="left:460.2px;top:877.505px;width:25.50px;height:24.60px;background:#fff;border:1.2px solid #8c8f94;border-radius:6.5px;box-shadow:inset 0 1px 2px rgba(0,0,0,.1)"></div><span class="x" style="letter-spacing:0.071px;left:521.20px;top:880.00px;font-size:19.79px;font-weight:400;color:#1f2937;">_menu_item_object_id</span><span class="x" style="letter-spacing:0.389px;left:1080.20px;top:880.00px;font-size:19.79px;font-weight:400;color:#1f2937;">inactive</span><svg class="a" style="left:1503.8px;top:880.205px;" width="23.50" height="15.90" viewBox="0 0 24 16" preserveAspectRatio="none"><path d="M12 0C6.500 0 2.200 3.400 0 8 2.200 12.600 6.500 16 12 16s9.800-3.400 12-8C21.800 3.400 17.500 0 12 0z" fill="#d1d5db"/><circle cx="12" cy="8" r="4.750" fill="#fbfbfc"/><circle cx="12" cy="8" r="3.400" fill="#d1d5db"/></svg><span class="x" style="letter-spacing:-0.555px;left:1554.70px;top:880.00px;font-size:19.79px;font-weight:400;color:#1f2937;">8 B</span><span class="x" style="letter-spacing:0.121px;left:1726.80px;top:880.00px;font-size:19.79px;font-weight:400;color:#1f2937;">10466</span><span class="x" style="letter-spacing:0.365px;left:1915.50px;top:880.00px;font-size:19.79px;font-weight:400;color:#a855f7;">WordPress core</span><svg class="a" style="left:2474.6px;top:875.405px;" width="15.40" height="17.00" viewBox="0 0 15.4 17" preserveAspectRatio="none"><path d="M3.900 8.600V5.200a3.800 3.800 0 0 1 7.600 0V8.600" fill="none" stroke="#1f2937" stroke-width="2.700"/><rect x="0" y="8.200" width="15.400" height="8.800" rx="1.600" fill="#1f2937"/></svg><div class="a" style="left:460.2px;top:937.9749999999999px;width:25.50px;height:24.60px;background:#fff;border:1.2px solid #8c8f94;border-radius:6.5px;box-shadow:inset 0 1px 2px rgba(0,0,0,.1)"></div><span class="x" style="letter-spacing:0.065px;left:521.20px;top:940.00px;font-size:19.79px;font-weight:400;color:#1f2937;">_menu_item_object</span><span class="x" style="letter-spacing:0.063px;left:1081.20px;top:940.00px;font-size:19.79px;font-weight:400;color:#1f2937;">active</span><svg class="a" style="left:1503.8px;top:940.675px;" width="23.50" height="15.90" viewBox="0 0 24 16" preserveAspectRatio="none"><path d="M12 0C6.500 0 2.200 3.400 0 8 2.200 12.600 6.500 16 12 16s9.800-3.400 12-8C21.800 3.400 17.500 0 12 0z" fill="#d1d5db"/><circle cx="12" cy="8" r="4.750" fill="#fbfbfc"/><circle cx="12" cy="8" r="3.400" fill="#d1d5db"/></svg><span class="x" style="letter-spacing:-0.055px;left:1553.70px;top:940.00px;font-size:19.79px;font-weight:400;color:#1f2937;">6 B</span><span class="x" style="letter-spacing:0.121px;left:1726.80px;top:940.00px;font-size:19.79px;font-weight:400;color:#1f2937;">10470</span><span class="x" style="letter-spacing:0.365px;left:1915.50px;top:940.00px;font-size:19.79px;font-weight:400;color:#a855f7;">WordPress core</span><svg class="a" style="left:2474.6px;top:935.8749999999999px;" width="15.40" height="17.00" viewBox="0 0 15.4 17" preserveAspectRatio="none"><path d="M3.900 8.600V5.200a3.800 3.800 0 0 1 7.600 0V8.600" fill="none" stroke="#1f2937" stroke-width="2.700"/><rect x="0" y="8.200" width="15.400" height="8.800" rx="1.600" fill="#1f2937"/></svg><div class="a" style="left:460.2px;top:998.4449999999999px;width:25.50px;height:24.60px;background:#fff;border:1.2px solid #8c8f94;border-radius:6.5px;box-shadow:inset 0 1px 2px rgba(0,0,0,.1)"></div><span class="x" style="letter-spacing:0.078px;left:521.20px;top:1001.00px;font-size:19.79px;font-weight:400;color:#1f2937;">_menu_item_target</span><span class="x" style="letter-spacing:0.389px;left:1080.20px;top:1001.00px;font-size:19.79px;font-weight:400;color:#1f2937;">inactive</span><svg class="a" style="left:1503.8px;top:1001.145px;" width="23.50" height="15.90" viewBox="0 0 24 16" preserveAspectRatio="none"><path d="M12 0C6.500 0 2.200 3.400 0 8 2.200 12.600 6.500 16 12 16s9.800-3.400 12-8C21.800 3.400 17.500 0 12 0z" fill="#d1d5db"/><circle cx="12" cy="8" r="4.750" fill="#fbfbfc"/><circle cx="12" cy="8" r="3.400" fill="#d1d5db"/></svg><span class="x" style="letter-spacing:-0.555px;left:1554.70px;top:1001.00px;font-size:19.79px;font-weight:400;color:#1f2937;">8 B</span><span class="x" style="letter-spacing:0.121px;left:1726.80px;top:1001.00px;font-size:19.79px;font-weight:400;color:#1f2937;">10463</span><span class="x" style="letter-spacing:0.365px;left:1915.50px;top:1001.00px;font-size:19.79px;font-weight:400;color:#a855f7;">WordPress core</span><svg class="a" style="left:2474.6px;top:996.3449999999999px;" width="15.40" height="17.00" viewBox="0 0 15.4 17" preserveAspectRatio="none"><path d="M3.900 8.600V5.200a3.800 3.800 0 0 1 7.600 0V8.600" fill="none" stroke="#1f2937" stroke-width="2.700"/><rect x="0" y="8.200" width="15.400" height="8.800" rx="1.600" fill="#1f2937"/></svg><div class="a" style="left:460.2px;top:1058.915px;width:25.50px;height:24.60px;background:#fff;border:1.2px solid #8c8f94;border-radius:6.5px;box-shadow:inset 0 1px 2px rgba(0,0,0,.1)"></div><span class="x" style="letter-spacing:-0.373px;left:521.20px;top:1061.00px;font-size:19.79px;font-weight:400;color:#1f2937;">_menu_item_classes</span><span class="x" style="letter-spacing:-0.057px;left:1081.20px;top:1061.00px;font-size:19.79px;font-weight:400;color:#1f2937;">456</span><svg class="a" style="left:1503.8px;top:1061.6149999999998px;" width="23.50" height="15.90" viewBox="0 0 24 16" preserveAspectRatio="none"><path d="M12 0C6.500 0 2.200 3.400 0 8 2.200 12.600 6.500 16 12 16s9.800-3.400 12-8C21.800 3.400 17.500 0 12 0z" fill="#d1d5db"/><circle cx="12" cy="8" r="4.750" fill="#fbfbfc"/><circle cx="12" cy="8" r="3.400" fill="#d1d5db"/></svg><span class="x" style="letter-spacing:-0.555px;left:1554.70px;top:1061.00px;font-size:19.79px;font-weight:400;color:#1f2937;">3 B</span><span class="x" style="letter-spacing:0.121px;left:1726.80px;top:1061.00px;font-size:19.79px;font-weight:400;color:#1f2937;">10469</span><span class="x" style="letter-spacing:0.365px;left:1915.50px;top:1061.00px;font-size:19.79px;font-weight:400;color:#a855f7;">WordPress core</span><svg class="a" style="left:2474.6px;top:1056.8149999999998px;" width="15.40" height="17.00" viewBox="0 0 15.4 17" preserveAspectRatio="none"><path d="M3.900 8.600V5.200a3.800 3.800 0 0 1 7.600 0V8.600" fill="none" stroke="#1f2937" stroke-width="2.700"/><rect x="0" y="8.200" width="15.400" height="8.800" rx="1.600" fill="#1f2937"/></svg><div class="a" style="left:460.2px;top:1119.385px;width:25.50px;height:24.60px;background:#fff;border:1.2px solid #8c8f94;border-radius:6.5px;box-shadow:inset 0 1px 2px rgba(0,0,0,.1)"></div><span class="x" style="letter-spacing:-0.042px;left:521.20px;top:1122.00px;font-size:19.79px;font-weight:400;color:#1f2937;">_menu_item_xfn</span><span class="x" style="letter-spacing:0.063px;left:1081.20px;top:1122.00px;font-size:19.79px;font-weight:400;color:#1f2937;">active</span><svg class="a" style="left:1503.8px;top:1122.0849999999998px;" width="23.50" height="15.90" viewBox="0 0 24 16" preserveAspectRatio="none"><path d="M12 0C6.500 0 2.200 3.400 0 8 2.200 12.600 6.500 16 12 16s9.800-3.400 12-8C21.800 3.400 17.500 0 12 0z" fill="#d1d5db"/><circle cx="12" cy="8" r="4.750" fill="#fbfbfc"/><circle cx="12" cy="8" r="3.400" fill="#d1d5db"/></svg><span class="x" style="letter-spacing:-0.055px;left:1553.70px;top:1122.00px;font-size:19.79px;font-weight:400;color:#1f2937;">6 B</span><span class="x" style="letter-spacing:0.121px;left:1726.80px;top:1122.00px;font-size:19.79px;font-weight:400;color:#1f2937;">10458</span><span class="x" style="letter-spacing:0.365px;left:1915.50px;top:1122.00px;font-size:19.79px;font-weight:400;color:#a855f7;">WordPress core</span><svg class="a" style="left:2474.6px;top:1117.2849999999999px;" width="15.40" height="17.00" viewBox="0 0 15.4 17" preserveAspectRatio="none"><path d="M3.900 8.600V5.200a3.800 3.800 0 0 1 7.600 0V8.600" fill="none" stroke="#1f2937" stroke-width="2.700"/><rect x="0" y="8.200" width="15.400" height="8.800" rx="1.600" fill="#1f2937"/></svg><div class="a" style="left:460.2px;top:1179.855px;width:25.50px;height:24.60px;background:#fff;border:1.2px solid #8c8f94;border-radius:6.5px;box-shadow:inset 0 1px 2px rgba(0,0,0,.1)"></div><span class="x" style="letter-spacing:-0.035px;left:521.20px;top:1182.00px;font-size:19.79px;font-weight:400;color:#1f2937;">_menu_item_url</span><span class="x" style="letter-spacing:-0.299px;left:1081.20px;top:1182.00px;font-size:19.79px;font-weight:400;color:#1f2937;">false</span><svg class="a" style="left:1503.8px;top:1182.5549999999998px;" width="23.50" height="15.90" viewBox="0 0 24 16" preserveAspectRatio="none"><path d="M12 0C6.500 0 2.200 3.400 0 8 2.200 12.600 6.500 16 12 16s9.800-3.400 12-8C21.800 3.400 17.500 0 12 0z" fill="#d1d5db"/><circle cx="12" cy="8" r="4.750" fill="#fbfbfc"/><circle cx="12" cy="8" r="3.400" fill="#d1d5db"/></svg><span class="x" style="letter-spacing:-0.555px;left:1554.70px;top:1182.00px;font-size:19.79px;font-weight:400;color:#1f2937;">5 B</span><span class="x" style="letter-spacing:0.371px;left:1726.80px;top:1182.00px;font-size:19.79px;font-weight:400;color:#1f2937;">10472</span><span class="x" style="letter-spacing:0.365px;left:1915.50px;top:1182.00px;font-size:19.79px;font-weight:400;color:#a855f7;">WordPress core</span><svg class="a" style="left:2474.6px;top:1177.7549999999999px;" width="15.40" height="17.00" viewBox="0 0 15.4 17" preserveAspectRatio="none"><path d="M3.900 8.600V5.200a3.800 3.800 0 0 1 7.600 0V8.600" fill="none" stroke="#1f2937" stroke-width="2.700"/><rect x="0" y="8.200" width="15.400" height="8.800" rx="1.600" fill="#1f2937"/></svg><div class="a" style="left:460.2px;top:1240.325px;width:25.50px;height:24.60px;background:#fff;border:1.2px solid #8c8f94;border-radius:6.5px;box-shadow:inset 0 1px 2px rgba(0,0,0,.1)"></div><span class="x" style="letter-spacing:-0.213px;left:521.20px;top:1242.00px;font-size:19.79px;font-weight:400;color:#1f2937;">_nav_menu_item</span><span class="x" style="letter-spacing:0.651px;left:1081.20px;top:1242.00px;font-size:19.79px;font-weight:400;color:#1f2937;">draft</span><svg class="a" style="left:1503.8px;top:1243.0249999999999px;" width="23.50" height="15.90" viewBox="0 0 24 16" preserveAspectRatio="none"><path d="M12 0C6.500 0 2.200 3.400 0 8 2.200 12.600 6.500 16 12 16s9.800-3.400 12-8C21.800 3.400 17.500 0 12 0z" fill="#d1d5db"/><circle cx="12" cy="8" r="4.750" fill="#fbfbfc"/><circle cx="12" cy="8" r="3.400" fill="#d1d5db"/></svg><span class="x" style="letter-spacing:-0.555px;left:1554.70px;top:1242.00px;font-size:19.79px;font-weight:400;color:#1f2937;">5 B</span><span class="x" style="letter-spacing:0.121px;left:1726.80px;top:1242.00px;font-size:19.79px;font-weight:400;color:#1f2937;">10474</span><span class="x" style="letter-spacing:0.503px;left:1915.00px;top:1242.00px;font-size:19.79px;font-weight:400;color:#374151;">Not scanned yet!</span><span class="x" style="letter-spacing:0.400px;left:2076.20px;top:1242.00px;font-size:19.79px;font-weight:400;color:#1d4ed8;-webkit-text-stroke:0.55px currentColor;">[<u>scan</u>]</span><div class="a" style="left:460.2px;top:1300.7949999999998px;width:25.50px;height:24.60px;background:#fff;border:1.2px solid #8c8f94;border-radius:6.5px;box-shadow:inset 0 1px 2px rgba(0,0,0,.1)"></div><span class="x" style="letter-spacing:-0.113px;left:521.20px;top:1303.00px;font-size:19.79px;font-weight:400;color:#1f2937;">_shortcode_hash</span><span class="x" style="letter-spacing:0.393px;left:1080.20px;top:1303.00px;font-size:19.79px;font-weight:400;color:#1f2937;">789</span><svg class="a" style="left:1503.8px;top:1303.4949999999997px;" width="23.50" height="15.90" viewBox="0 0 24 16" preserveAspectRatio="none"><path d="M12 0C6.500 0 2.200 3.400 0 8 2.200 12.600 6.500 16 12 16s9.800-3.400 12-8C21.800 3.400 17.500 0 12 0z" fill="#d1d5db"/><circle cx="12" cy="8" r="4.750" fill="#fbfbfc"/><circle cx="12" cy="8" r="3.400" fill="#d1d5db"/></svg><span class="x" style="letter-spacing:-0.555px;left:1554.70px;top:1303.00px;font-size:19.79px;font-weight:400;color:#1f2937;">3 B</span><span class="x" style="letter-spacing:0.121px;left:1726.80px;top:1303.00px;font-size:19.79px;font-weight:400;color:#1f2937;">10473</span><span class="x" style="letter-spacing:0.503px;left:1915.00px;top:1303.00px;font-size:19.79px;font-weight:400;color:#374151;">Not scanned yet!</span><span class="x" style="letter-spacing:0.400px;left:2076.20px;top:1303.00px;font-size:19.79px;font-weight:400;color:#1d4ed8;-webkit-text-stroke:0.55px currentColor;">[<u>scan</u>]</span><div class="a" style="left:460.2px;top:1361.265px;width:25.50px;height:24.60px;background:#fff;border:1.2px solid #8c8f94;border-radius:6.5px;box-shadow:inset 0 1px 2px rgba(0,0,0,.1)"></div><span class="x" style="letter-spacing:-0.105px;left:521.20px;top:1363.00px;font-size:19.79px;font-weight:400;color:#1f2937;">_transient_data</span><span class="x" style="letter-spacing:0.043px;left:1080.20px;top:1363.00px;font-size:19.79px;font-weight:400;color:#1f2937;">123</span><svg class="a" style="left:1503.8px;top:1363.965px;" width="23.50" height="15.90" viewBox="0 0 24 16" preserveAspectRatio="none"><path d="M12 0C6.500 0 2.200 3.400 0 8 2.200 12.600 6.500 16 12 16s9.800-3.400 12-8C21.800 3.400 17.500 0 12 0z" fill="#d1d5db"/><circle cx="12" cy="8" r="4.750" fill="#fbfbfc"/><circle cx="12" cy="8" r="3.400" fill="#d1d5db"/></svg><span class="x" style="letter-spacing:-0.555px;left:1554.70px;top:1363.00px;font-size:19.79px;font-weight:400;color:#1f2937;">3 B</span><span class="x" style="letter-spacing:0.121px;left:1726.80px;top:1363.00px;font-size:19.79px;font-weight:400;color:#1f2937;">10474</span><span class="x" style="letter-spacing:0.503px;left:1915.00px;top:1363.00px;font-size:19.79px;font-weight:400;color:#374151;">Not scanned yet!</span><span class="x" style="letter-spacing:0.400px;left:2076.20px;top:1363.00px;font-size:19.79px;font-weight:400;color:#1d4ed8;-webkit-text-stroke:0.55px currentColor;">[<u>scan</u>]</span><div class="a" style="left:460.2px;top:1421.735px;width:25.50px;height:24.60px;background:#fff;border:1.2px solid #8c8f94;border-radius:6.5px;box-shadow:inset 0 1px 2px rgba(0,0,0,.1)"></div><span class="x" style="letter-spacing:-0.178px;left:521.20px;top:1424.00px;font-size:19.79px;font-weight:400;color:#1f2937;">_post_views_count</span><span class="x" style="letter-spacing:0.393px;left:1080.20px;top:1424.00px;font-size:19.79px;font-weight:400;color:#1f2937;">789</span><svg class="a" style="left:1503.8px;top:1424.4349999999997px;" width="23.50" height="15.90" viewBox="0 0 24 16" preserveAspectRatio="none"><path d="M12 0C6.500 0 2.200 3.400 0 8 2.200 12.600 6.500 16 12 16s9.800-3.400 12-8C21.800 3.400 17.500 0 12 0z" fill="#d1d5db"/><circle cx="12" cy="8" r="4.750" fill="#fbfbfc"/><circle cx="12" cy="8" r="3.400" fill="#d1d5db"/></svg><span class="x" style="letter-spacing:-0.555px;left:1554.70px;top:1424.00px;font-size:19.79px;font-weight:400;color:#1f2937;">3 B</span><span class="x" style="letter-spacing:0.371px;left:1726.80px;top:1424.00px;font-size:19.79px;font-weight:400;color:#1f2937;">10472</span><span class="x" style="letter-spacing:0.503px;left:1915.00px;top:1424.00px;font-size:19.79px;font-weight:400;color:#374151;">Not scanned yet!</span><span class="x" style="letter-spacing:0.400px;left:2076.20px;top:1424.00px;font-size:19.79px;font-weight:400;color:#1d4ed8;-webkit-text-stroke:0.55px currentColor;">[<u>scan</u>]</span><div class="a" style="left:460.2px;top:1482.205px;width:25.50px;height:24.60px;background:#fff;border:1.2px solid #8c8f94;border-radius:6.5px;box-shadow:inset 0 1px 2px rgba(0,0,0,.1)"></div><span class="x" style="letter-spacing:-0.288px;left:521.20px;top:1484.00px;font-size:19.79px;font-weight:400;color:#1f2937;">_likes_count</span><span class="x" style="transform:scaleX(0.9957);transform-origin:-0.00px 50%;letter-spacing:-0.891px;left:1081.20px;top:1484.00px;font-size:19.79px;font-weight:400;color:#1f2937;">yes</span><svg class="a" style="left:1503.8px;top:1484.9049999999997px;" width="23.50" height="15.90" viewBox="0 0 24 16" preserveAspectRatio="none"><path d="M12 0C6.500 0 2.200 3.400 0 8 2.200 12.600 6.500 16 12 16s9.800-3.400 12-8C21.800 3.400 17.500 0 12 0z" fill="#d1d5db"/><circle cx="12" cy="8" r="4.750" fill="#fbfbfc"/><circle cx="12" cy="8" r="3.400" fill="#d1d5db"/></svg><span class="x" style="letter-spacing:-0.555px;left:1554.70px;top:1484.00px;font-size:19.79px;font-weight:400;color:#1f2937;">3 B</span><span class="x" style="letter-spacing:0.121px;left:1726.80px;top:1484.00px;font-size:19.79px;font-weight:400;color:#1f2937;">10468</span><span class="x" style="letter-spacing:0.503px;left:1915.00px;top:1484.00px;font-size:19.79px;font-weight:400;color:#374151;">Not scanned yet!</span><span class="x" style="letter-spacing:0.400px;left:2076.20px;top:1484.00px;font-size:19.79px;font-weight:400;color:#1d4ed8;-webkit-text-stroke:0.55px currentColor;">[<u>scan</u>]</span><div class="a" style="left:460.2px;top:1542.675px;width:25.50px;height:24.60px;background:#fff;border:1.2px solid #8c8f94;border-radius:6.5px;box-shadow:inset 0 1px 2px rgba(0,0,0,.1)"></div><span class="x" style="letter-spacing:-0.363px;left:521.20px;top:1545.00px;font-size:19.79px;font-weight:400;color:#1f2937;">_share_count</span><span class="x" style="letter-spacing:0.531px;left:1080.20px;top:1545.00px;font-size:19.79px;font-weight:400;color:#1f2937;">Lorem ipsum dolor si <b>...</b></span><svg class="a" style="left:1503.8px;top:1545.3749999999998px;" width="23.50" height="15.90" viewBox="0 0 24 16" preserveAspectRatio="none"><path d="M12 0C6.500 0 2.200 3.400 0 8 2.200 12.600 6.500 16 12 16s9.800-3.400 12-8C21.800 3.400 17.500 0 12 0z" fill="#d1d5db"/><circle cx="12" cy="8" r="4.750" fill="#fbfbfc"/><circle cx="12" cy="8" r="3.400" fill="#d1d5db"/></svg><span class="x" style="letter-spacing:-0.070px;left:1553.70px;top:1545.00px;font-size:19.79px;font-weight:400;color:#1f2937;">27 B</span><span class="x" style="letter-spacing:0.121px;left:1726.80px;top:1545.00px;font-size:19.79px;font-weight:400;color:#1f2937;">10470</span><span class="x" style="letter-spacing:0.503px;left:1915.00px;top:1545.00px;font-size:19.79px;font-weight:400;color:#374151;">Not scanned yet!</span><span class="x" style="letter-spacing:0.400px;left:2076.20px;top:1545.00px;font-size:19.79px;font-weight:400;color:#1d4ed8;-webkit-text-stroke:0.55px currentColor;">[<u>scan</u>]</span><div class="a" style="left:460.2px;top:1603.145px;width:25.50px;height:24.60px;background:#fff;border:1.2px solid #8c8f94;border-radius:6.5px;box-shadow:inset 0 1px 2px rgba(0,0,0,.1)"></div><span class="x" style="letter-spacing:-0.339px;left:521.20px;top:1605.00px;font-size:19.79px;font-weight:400;color:#1f2937;">_social_image</span><span class="x" style="letter-spacing:-0.249px;left:1081.20px;top:1605.00px;font-size:19.79px;font-weight:400;color:#1f2937;">false</span><svg class="a" style="left:1503.8px;top:1605.8449999999998px;" width="23.50" height="15.90" viewBox="0 0 24 16" preserveAspectRatio="none"><path d="M12 0C6.500 0 2.200 3.400 0 8 2.200 12.600 6.500 16 12 16s9.800-3.400 12-8C21.800 3.400 17.500 0 12 0z" fill="#d1d5db"/><circle cx="12" cy="8" r="4.750" fill="#fbfbfc"/><circle cx="12" cy="8" r="3.400" fill="#d1d5db"/></svg><span class="x" style="letter-spacing:-0.555px;left:1554.70px;top:1605.00px;font-size:19.79px;font-weight:400;color:#1f2937;">5 B</span><span class="x" style="letter-spacing:0.121px;left:1726.80px;top:1605.00px;font-size:19.79px;font-weight:400;color:#1f2937;">10455</span><span class="x" style="letter-spacing:0.503px;left:1915.00px;top:1605.00px;font-size:19.79px;font-weight:400;color:#374151;">Not scanned yet!</span><span class="x" style="letter-spacing:0.400px;left:2076.20px;top:1605.00px;font-size:19.79px;font-weight:400;color:#1d4ed8;-webkit-text-stroke:0.55px currentColor;">[<u>scan</u>]</span></div></div></body></html>
